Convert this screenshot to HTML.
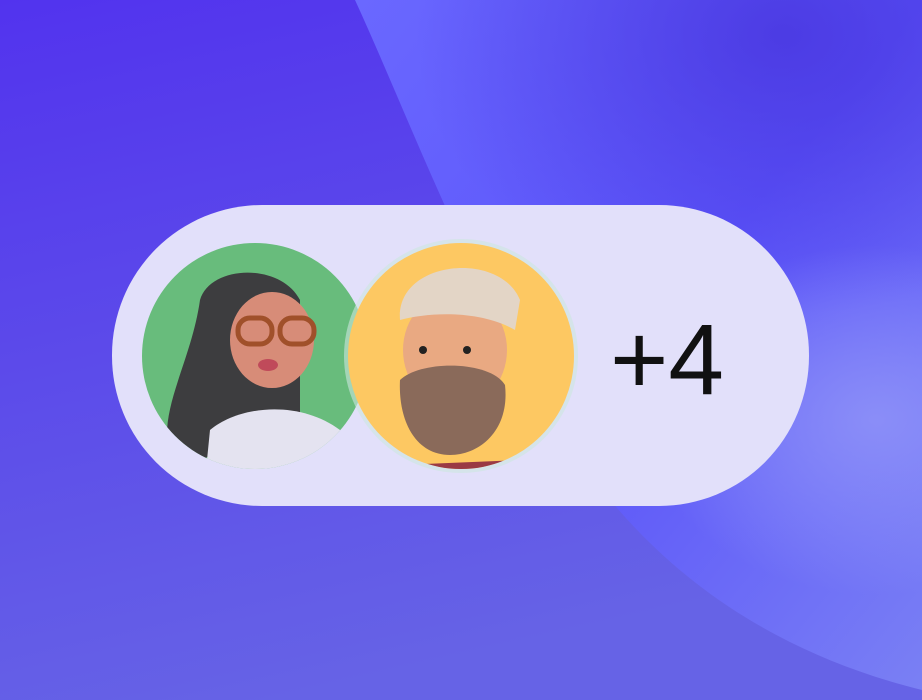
<!DOCTYPE html>
<html><head><style>
html,body{margin:0;padding:0;width:922px;height:700px;overflow:hidden}
</style></head><body>
<svg width="922" height="700" viewBox="0 0 922 700" xmlns="http://www.w3.org/2000/svg">
<defs>
<linearGradient id="bg" x1="0" y1="0" x2="0.3" y2="1">
<stop offset="0" stop-color="#5233ee"/><stop offset="1" stop-color="#6663e6"/>
</linearGradient>
<linearGradient id="bg2" x1="0" y1="0" x2="1" y2="1">
<stop offset="0" stop-color="#6a68ff"/><stop offset="0.5" stop-color="#5b54fa"/><stop offset="1" stop-color="#7a80f4"/>
</linearGradient>
<radialGradient id="dk" cx="0.85" cy="0.05" r="0.4">
<stop offset="0" stop-color="#4632dc" stop-opacity="0.75"/><stop offset="1" stop-color="#4632dc" stop-opacity="0"/>
</radialGradient>
<radialGradient id="glow" cx="0.95" cy="0.6" r="0.25">
<stop offset="0" stop-color="#9296f8" stop-opacity="0.8"/><stop offset="1" stop-color="#9aa0fa" stop-opacity="0"/>
</radialGradient>
<clipPath id="c1"><circle cx="255" cy="356" r="113"/></clipPath>
<clipPath id="c2"><circle cx="461" cy="356" r="113"/></clipPath>
</defs>
<rect width="922" height="700" fill="url(#bg)"/>
<path d="M355 0 C410 120 460 260 560 430 C640 560 760 650 922 690 L922 0 Z" fill="url(#bg2)"/>
<rect width="922" height="700" fill="url(#dk)"/>
<rect width="922" height="700" fill="url(#glow)"/>
<rect x="112" y="205" width="697" height="301" rx="150" fill="#e2e0fa"/>
<g clip-path="url(#c1)">
<rect x="140" y="240" width="240" height="240" fill="#68bc7c"/>
<path d="M200 300 C210 265 280 262 300 300 L300 420 L175 470 C150 420 190 370 200 300Z" fill="#3d3d3f"/>
<ellipse cx="272" cy="340" rx="42" ry="48" fill="#d78c78"/>
<path d="M210 430 C240 405 300 400 340 430 L360 480 L205 480Z" fill="#e4e3f0"/>
<rect x="238" y="318" width="34" height="26" rx="12" fill="none" stroke="#a0502a" stroke-width="5"/>
<rect x="280" y="318" width="34" height="26" rx="12" fill="none" stroke="#a0502a" stroke-width="5"/>
<ellipse cx="268" cy="365" rx="10" ry="6" fill="#c04a5a"/>
</g>
<circle cx="461" cy="356" r="117" fill="#cde6e0" opacity="0.6"/>
<g clip-path="url(#c2)">
<rect x="345" y="240" width="240" height="240" fill="#fdc862"/>
<ellipse cx="455" cy="350" rx="52" ry="58" fill="#e9a982"/>
<path d="M400 320 C395 260 500 250 520 300 L515 330 C480 310 430 312 400 320Z" fill="#e3d5c6"/>
<path d="M400 380 C420 360 490 360 505 385 C510 430 480 455 450 455 C415 455 398 420 400 380Z" fill="#8a6a5a"/>
<path d="M400 465 L520 460 L520 480 L400 480Z" fill="#9a3a44"/>
<circle cx="423" cy="350" r="4" fill="#222"/><circle cx="467" cy="350" r="4" fill="#222"/>
</g>
<text x="610" y="394" font-family="Liberation Sans, sans-serif" font-size="100" fill="#111">+4</text>
</svg>
</body></html>
